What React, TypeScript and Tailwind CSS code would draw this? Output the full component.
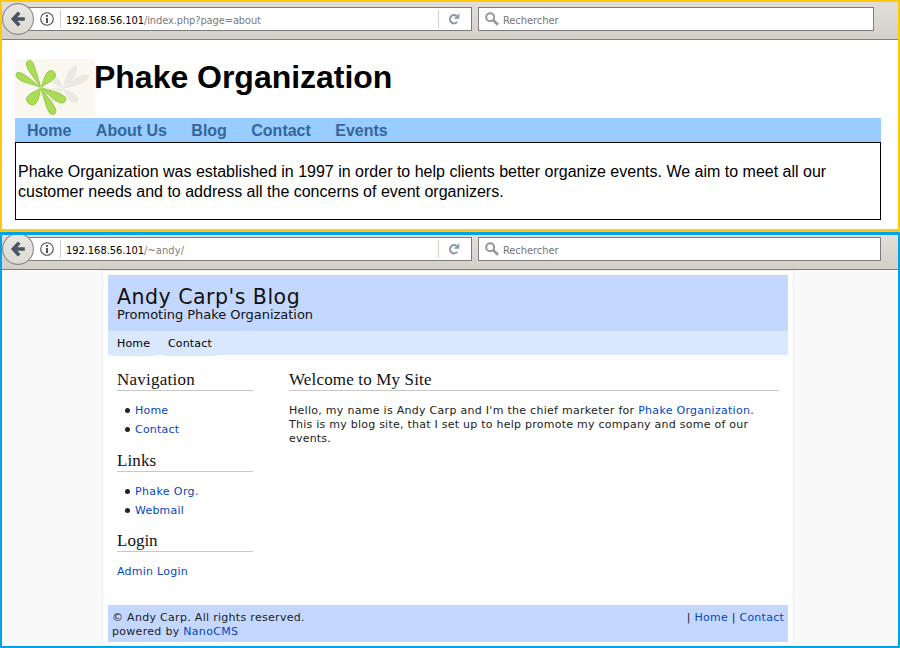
import React from "react";

const TAHOMA = "font-['DejaVu_Sans_Condensed','DejaVu_Sans',sans-serif] [font-stretch:condensed]";

function BackIcon() {
  return (
    <svg className="block h-8 w-8" viewBox="0 0 32 32">
      <defs>
        <linearGradient id="back" x1="0" y1="0" x2="0" y2="1">
          <stop offset="0" stopColor="#e9e7e3" />
          <stop offset="1" stopColor="#dddad4" />
        </linearGradient>
      </defs>
      <circle cx="16" cy="16" r="15.4" fill="url(#back)" stroke="#8b8b8b" strokeWidth="1.1" />
      <path d="M17.2 9.6 L11.4 16 L17.2 22.4 M11.5 16 H22.8" fill="none" stroke="#4a5562" strokeWidth="3.6" />
    </svg>
  );
}

function InfoIcon() {
  return (
    <svg className="block h-[14px] w-[14px]" viewBox="0 0 14 14">
      <circle cx="7" cy="7" r="6.3" fill="#fff" stroke="#4d4d4d" strokeWidth="1.1" />
      <rect x="6.1" y="3" width="1.8" height="1.8" fill="#404040" />
      <rect x="6.1" y="6" width="1.8" height="5" fill="#404040" />
    </svg>
  );
}

function ReloadIcon() {
  return (
    <svg className="block h-3 w-3" viewBox="0 0 12 12">
      <path d="M8.6 3 A4.1 4.1 0 1 0 9.2 8.9" fill="none" stroke="#8c99a5" strokeWidth="2.1" />
      <path d="M11.3 0.3 V5.8 H5.8 Z" fill="#8c99a5" />
    </svg>
  );
}

function SearchIcon() {
  return (
    <svg className="block h-[14px] w-[14px]" viewBox="0 0 14 14">
      <circle cx="5.2" cy="5.2" r="4" fill="none" stroke="#969696" strokeWidth="2" />
      <path d="M8.2 8.2 L13 12.8" stroke="#969696" strokeWidth="2.6" />
    </svg>
  );
}

function Toolbar({ path, pathClass, barClass, searchClass }: { path: string; pathClass: string; barClass: string; searchClass: string }) {
  return (
    <div className={`flex items-start overflow-hidden border-b border-[#7d7d7d] bg-linear-to-b from-[#e2dfda] to-[#d4d0c8] ${barClass}`}>
      <div className="relative z-10 -mt-1 h-8 w-8 shrink-0">
        <BackIcon />
      </div>
      <div className={`-ml-4 flex h-6 w-[454px] shrink-0 items-center border border-[#7d7d7d] bg-white text-[11px] leading-[20px] ${TAHOMA}`}>
        <div className="ml-[21px]">
          <InfoIcon />
        </div>
        <div className="ml-[6px] h-[18px] w-px bg-[#d0ccc6]" />
        <div className="ml-[5px] grow pt-[3px] whitespace-nowrap">
          <span className="inline-block w-[78px] tracking-[-0.04px] text-black">192.168.56.101</span>
          <span className={`text-[#7b7b7b] ${pathClass}`}>{path}</span>
        </div>
        <div className="h-[18px] w-px bg-[#d4cfc7]" />
        <div className="mr-[11px] ml-[9px]">
          <ReloadIcon />
        </div>
      </div>
      <div className={`ml-[6px] flex h-6 shrink-0 items-center border border-[#7d7d7d] bg-white text-[11px] leading-[20px] text-[#757575] ${TAHOMA} ${searchClass}`}>
        <div className="mb-[1px] ml-[6px]">
          <SearchIcon />
        </div>
        <span className="ml-1 pt-[3px] tracking-[-0.05px]">Rechercher</span>
      </div>
    </div>
  );
}

function Logo() {
  return (
    <svg className="block h-[58px] w-20 shrink-0" viewBox="0 0 80 58">
      <rect width="80" height="58" fill="#faf7ef" />
      <g fill="#ebe9e2">
        <path d="M48 30 C50 17 55 7 61 6 C65 12 57 23 48 30Z" />
        <path d="M48 30 C56 20 69 13 74 17 C74 24 60 27 48 30Z" />
        <path d="M48 30 C57 31 66 38 63 43 C56 47 51 39 48 30Z" />
        <path d="M48 30 C42 27 34 22 36 18 C41 14 46 22 48 30Z" />
        <path d="M48 30 C44 42 35 50 31 46 C30 40 40 33 48 30Z" />
        <path d="M48 30 C40 34 27 40 24 36 C27 30 38 28 48 30Z" />
      </g>
      <g fill="#aadc55" stroke="#8fc540" strokeWidth="0.9" strokeLinejoin="round">
        <path d="M26 28.5 C21 21 10 9 11.5 3.5 C12.5 1 16 0.5 18 4 C20 8 23 20 26 28.5Z" />
        <path d="M26 28.5 C20 25 6 24 2 18.5 C-0.5 15 2 12 6 14 C13 17 20 24.5 26 28.5Z" />
        <path d="M26 28.5 C28.5 23 29.5 15 34 12 C38 10 42.5 15 39.5 19 C36 23 30 25 26 28.5Z" />
        <path d="M26 28.5 C32 31 43 33 49 37 C52.5 39.5 51 44 46.5 44 C40 43.5 32 33 26 28.5Z" />
        <path d="M26 28.5 C30 35 38 44 40.5 50 C42 55 38 57.5 34.5 54 C31 49 28.5 37 26 28.5Z" />
        <path d="M26 28.5 C24.5 34 24 42 19.5 45.5 C15.5 47.5 10 42.5 12 38 C15 33.5 22 32.5 26 28.5Z" />
      </g>
      <circle cx="26" cy="28.5" r="2" fill="#b4e36c" />
    </svg>
  );
}

function Heading({ children, className = "" }: { children: React.ReactNode; className?: string }) {
  return (
    <h2 className={`h-[21px] border-b border-[#c8c8c8] font-['Liberation_Serif',serif] text-[17px] leading-[20px] text-[#111] ${className}`}>
      {children}
    </h2>
  );
}

function Bullets({ items }: { items: { label: string; cls: string }[] }) {
  return (
    <ul className="mt-[10px]">
      {items.map((item) => (
        <li key={item.label} className="flex h-[19px] items-center pl-2">
          <span className="mr-[5px] h-[5px] w-[5px] rounded-full bg-[#222]" />
          <a className={`text-[#0645c0] ${item.cls}`}>{item.label}</a>
        </li>
      ))}
    </ul>
  );
}

export default function App() {
  return (
    <div className="h-[648px] w-[900px] overflow-hidden bg-white">
      <section className="h-[232px] border-2 border-b-[3px] border-[#ffc90e] font-['Liberation_Sans',Arial,sans-serif]">
        <Toolbar path="/index.php?page=about" pathClass="tracking-[-0.11px]" barClass="h-[38px] pt-[5px]" searchClass="w-[396px]" />
        <div className="ml-[13px] w-[866px] pt-[19px]">
          <div className="flex h-[59px] items-start">
            <Logo />
            <h1 className="-ml-px text-[32px] leading-[36px] font-bold tracking-[-0.02px] text-black">Phake Organization</h1>
          </div>
          <nav className="flex h-6 gap-[24.4px] bg-[#99ccff] pt-px pl-3 text-[16px] leading-6 font-bold text-[#336699]">
            <a>Home</a>
            <a>About Us</a>
            <a>Blog</a>
            <a>Contact</a>
            <a>Events</a>
          </nav>
          <p className="h-[78px] border border-black pt-[19px] pl-[2px] text-[16px] leading-5 whitespace-nowrap text-black">
            Phake Organization was established in 1997 in order to help clients better organize events. We aim to meet all our
            <br />
            customer needs and to address all the concerns of event organizers.
          </p>
        </div>
      </section>

      <section className="flex h-[416px] flex-col border-2 border-t-[3px] border-[#00a2e8] bg-[#f9f9f9]">
        <Toolbar path="/~andy/" pathClass="tracking-[0.1px]" barClass="h-[35px] pt-[2px]" searchClass="w-[403px]" />
        <div className="ml-[100px] flex w-[692px] grow flex-col border-x border-t border-[#eeeeee] bg-white px-[5px] pt-1 pb-1 font-['DejaVu_Sans',Verdana,sans-serif] text-[11px] leading-[14px] whitespace-nowrap text-[#222]">
          <header className="h-14 bg-[#c4d8ff] pt-[11px] pl-[9px] text-[#111]">
            <h1 className="text-[20.5px] leading-[22px] tracking-[0.5px]">Andy Carp&apos;s Blog</h1>
            <p className="text-[13px] leading-[14px] tracking-[-0.03px]">Promoting Phake Organization</p>
          </header>
          <nav className="flex h-6 bg-[#d9e7ff] pl-[3px] leading-[25px] tracking-[0.15px] text-black">
            <a className="h-[25px] w-11 rounded-b-[2px] bg-[#d9e7ff] pl-[6px]">Home</a>
            <a className="ml-[7px] h-[25px] w-[55px] rounded-b-[2px] bg-[#d9e7ff] pl-[6px]">Contact</a>
          </nav>
          <main className="flex h-[250px] pt-[15px] pl-[9px]">
            <aside className="w-[136px]">
              <Heading className="tracking-[0.25px]">Navigation</Heading>
              <Bullets items={[{ label: "Home", cls: "tracking-[0.2px]" }, { label: "Contact", cls: "tracking-[0.2px]" }]} />
              <Heading className="mt-3 tracking-[0.1px]">Links</Heading>
              <Bullets items={[{ label: "Phake Org.", cls: "tracking-[0.38px]" }, { label: "Webmail", cls: "tracking-[0.2px]" }]} />
              <Heading className="mt-[11px]">Login</Heading>
              <p className="mt-[13px]">
                <a className="tracking-[0.25px] text-[#0645c0]">Admin Login</a>
              </p>
            </aside>
            <article className="ml-9 w-[490px]">
              <Heading className="tracking-[0.16px]">Welcome to My Site</Heading>
              <p className="mt-[13px]">
                <span className="tracking-[0.285px]">
                  Hello, my name is Andy Carp and I&apos;m the chief marketer for <a className="text-[#0645c0]">Phake Organization</a>.
                </span>
                <br />
                <span className="tracking-[0.245px]">This is my blog site, that I set up to help promote my company and some of our</span>
                <br />
                <span className="tracking-[0.2px]">events.</span>
              </p>
            </article>
          </main>
          <footer className="flex h-[37px] justify-between bg-[#c4d8ff] px-1 pt-[6px]">
            <p className="tracking-[0.3px]">
              © Andy Carp. All rights reserved.
              <br />
              powered by <a className="text-[#0645c0]">NanoCMS</a>
            </p>
            <p className="tracking-[0.25px]">
              | <a className="text-[#0645c0]">Home</a> | <a className="text-[#0645c0]">Contact</a>
            </p>
          </footer>
        </div>
      </section>
    </div>
  );
}
